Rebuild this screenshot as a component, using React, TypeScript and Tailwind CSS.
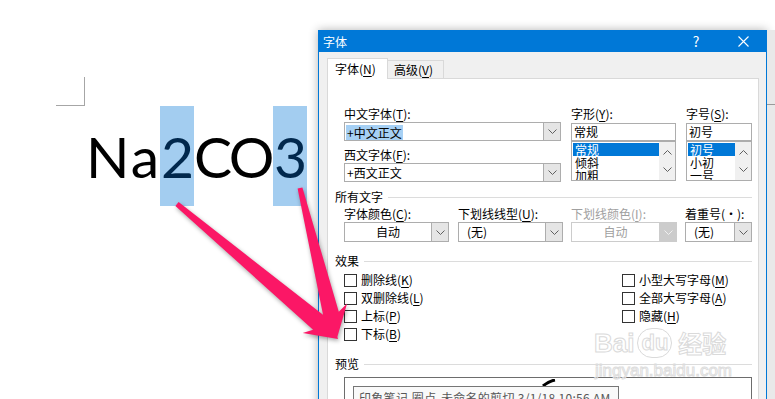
import React from "react";

const ui = "font-['Noto_Sans_CJK_SC',sans-serif]";

const Chevron = ({ up, color = "#606060" }: { up?: boolean; color?: string }) => (
  <svg width="9" height="5" viewBox="0 0 9 5">
    <path d={up ? "M0.5 4.5 L4.5 0.5 L8.5 4.5" : "M0.5 0.5 L4.5 4.5 L8.5 0.5"} stroke={color} fill="none" />
  </svg>
);

const Key = ({ k }: { k: string }) => <span className="underline underline-offset-2">{k}</span>;

const Label = ({ text, k, gray }: { text: string; k: string; gray?: boolean }) => (
  <div className={`h-[16px] leading-[16px] whitespace-nowrap ${gray ? "text-[#a0a0a0]" : "text-black"}`}>
    {text}(<Key k={k} />):
  </div>
);

const Dropdown = ({ text, w, center, disabled }: { text: string; w: string; center?: boolean; disabled?: boolean }) => (
  <div className={`flex h-[20px] border bg-white ${w} ${disabled ? "border-[#cccccc]" : "border-[#adadad]"}`}>
    <div className={`flex-1 leading-[18px] ${center ? "text-center" : "pl-[8px]"} ${disabled ? "text-[#a0a0a0]" : "text-black"}`}>{text}</div>
    <div className={`w-[17px] flex items-center justify-center border-l ${disabled ? "bg-[#cccccc] border-[#cccccc]" : "bg-[#e5e5e5] border-[#adadad]"}`}>
      <Chevron color={disabled ? "#f0f0f0" : "#606060"} />
    </div>
  </div>
);

const ListBox = ({ items, w }: { items: string[]; w: string }) => (
  <div className={`flex h-[40px] border border-[#adadad] bg-white ${w}`}>
    <div className="flex-1 pl-px pt-px overflow-hidden">
      {items.map((it, i) => (
        <div key={it} className={`h-[13px] leading-[13px] pl-[2px] ${i === 0 ? "bg-[#0078d7] text-white" : "text-black"}`}>
          {it}
        </div>
      ))}
    </div>
    <div className="w-[16px] bg-[#f0f0f0] flex flex-col items-center justify-between py-[8px]">
      <Chevron up />
      <Chevron />
    </div>
  </div>
);

const Check = ({ text, k }: { text: string; k: string }) => (
  <div className="flex items-center h-[18px]">
    <div className="w-[13px] h-[13px] border border-[#333333] bg-white" />
    <div className="ml-[4px] leading-[16px] whitespace-nowrap">
      {text}(<Key k={k} />)
    </div>
  </div>
);

const Section = ({ title }: { title: string }) => (
  <div className="flex items-center h-[16px]">
    <div className="leading-[16px] whitespace-nowrap">{title}</div>
    <div className="h-px bg-[#dcdcdc] flex-1 ml-[5px]" />
  </div>
);

function arrow(sx: number, sy: number, tx: number, ty: number, w0: number, w1: number, head: number, half: number, barb: number) {
  const L = Math.hypot(tx - sx, ty - sy);
  const ux = (tx - sx) / L, uy = (ty - sy) / L;
  const nx = -uy, ny = ux;
  const bx = tx - ux * head, by = ty - uy * head;
  const wx = tx - ux * (head + barb), wy = ty - uy * (head + barb);
  const p = [
    [sx + nx * w0, sy + ny * w0],
    [bx + nx * w1, by + ny * w1],
    [wx + nx * half, wy + ny * half],
    [tx, ty],
    [wx - nx * half, wy - ny * half],
    [bx - nx * w1, by - ny * w1],
    [sx - nx * w0, sy - ny * w0],
  ];
  return p.map((q) => `${q[0].toFixed(1)},${q[1].toFixed(1)}`).join(" ");
}

export default function App() {
  return (
    <div className={`relative w-[775px] h-[399px] overflow-hidden bg-white flex ${ui} text-[12px]`}>
      {/* document page */}
      <div className="w-[318px] shrink-0 pl-[56px] pt-[77px]">
        <div className="w-[29px] h-[29px] border-r border-b border-[#a6a6a6]" />
        <div className="ml-[29px] flex font-['Lato',sans-serif] text-[57px] leading-[100px] text-black whitespace-nowrap">
          <span className="w-[75px] pl-[1px] tracking-[2px]">Na</span>
          <span className="w-[34px] pl-[1px] bg-[#a3cdf0] text-[#01284d]">2</span>
          <span className="w-[79px] tracking-[-2.5px]">CO</span>
          <span className="w-[34px] pl-[1px] bg-[#a3cdf0] text-[#01284d]">3</span>
        </div>
      </div>

      {/* dialog */}
      <div className="mt-[30px] w-[449px] h-[380px] shrink-0 border border-[#0078d7] bg-[#f0f0f0] shadow-[0_0_9px_rgba(0,0,0,0.3)] flex flex-col">
        <div className="h-[25px] bg-[#0078d7] flex items-center text-white">
          <div className="pl-[4px] flex-1">字体</div>
          <div className="w-[20px] text-[14px] text-center">?</div>
          <div className="w-[46px] flex justify-center ml-[14px]">
            <svg width="11" height="11" viewBox="0 0 11 11">
              <path d="M0.5 0.5 L10.5 10.5 M10.5 0.5 L0.5 10.5" stroke="white" strokeWidth="1.1" />
            </svg>
          </div>
        </div>
        <div className="flex-1 flex flex-col pl-[8px] pr-[7px] pt-[6px]">
          <div className="flex items-end h-[20px]">
            <div className="relative z-10 -mb-px h-[21px] w-[61px] bg-white border-t border-l border-r border-[#d9d9d9] leading-[20px] pl-[7px]">
              字体(<Key k="N" />)
            </div>
            <div className="h-[18px] w-[56px] border-t border-r border-[#d9d9d9] leading-[17px] pl-[6px]">
              高级(<Key k="V" />)
            </div>
          </div>
          <div className="flex-1 border border-[#d9d9d9] bg-white pl-[7px] pr-[6px] pt-[27px] text-black">
            {/* font pickers */}
            <div className="flex pl-[9px]">
              <div className="w-[217px]">
                <Label text="中文字体" k="T" />
                <div className="flex h-[19px] border border-[#adadad] bg-white">
                  <div className="flex-1 pl-px pt-px">
                    <span className="bg-[#a6d0f4] leading-[15px] inline-block px-px">+中文正文</span>
                  </div>
                  <div className="w-[17px] flex items-center justify-center border-l border-[#adadad] bg-[#e5e5e5]">
                    <Chevron />
                  </div>
                </div>
                <div className="mt-[6px]">
                  <Label text="西文字体" k="F" />
                </div>
                <div className="flex h-[19px] border border-[#adadad] bg-white">
                  <div className="flex-1 pl-[2px] leading-[17px]">+西文正文</div>
                  <div className="w-[17px] flex items-center justify-center border-l border-[#adadad] bg-[#e5e5e5]">
                    <Chevron />
                  </div>
                </div>
              </div>
              <div className="w-[105px] ml-[10px]">
                <Label text="字形" k="Y" />
                <div className="mt-px h-[18px] border border-[#adadad] leading-[16px] pl-[2px]">常规</div>
                <ListBox items={["常规", "倾斜", "加粗"]} w="w-[105px]" />
              </div>
              <div className="w-[66px] ml-[10px]">
                <Label text="字号" k="S" />
                <div className="mt-px h-[18px] border border-[#adadad] leading-[16px] pl-[2px]">初号</div>
                <ListBox items={["初号", "小初", "一号"]} w="w-[66px]" />
              </div>
            </div>

            {/* all text */}
            <div className="mt-[7px]">
              <Section title="所有文字" />
            </div>
            <div className="flex pl-[9px] mt-px">
              <div className="w-[105px]">
                <Label text="字体颜色" k="C" />
                <Dropdown text="自动" w="w-[105px]" center />
              </div>
              <div className="w-[105px] ml-[9px]">
                <Label text="下划线线型" k="U" />
                <Dropdown text="(无)" w="w-[105px]" />
              </div>
              <div className="w-[106px] ml-[8px]">
                <Label text="下划线颜色" k="I" gray />
                <Dropdown text="自动" w="w-[106px]" center disabled />
              </div>
              <div className="w-[67px] ml-[8px]">
                <div className="h-[16px] leading-[16px] whitespace-nowrap">着重号(·):</div>
                <Dropdown text="(无)" w="w-[67px]" />
              </div>
            </div>

            {/* effects */}
            <div className="mt-[11px]">
              <Section title="效果" />
            </div>
            <div className="flex pl-[9px] mt-[2px]">
              <div className="w-[278px]">
                <Check text="删除线" k="K" />
                <Check text="双删除线" k="L" />
                <Check text="上标" k="P" />
                <Check text="下标" k="B" />
              </div>
              <div>
                <Check text="小型大写字母" k="M" />
                <Check text="全部大写字母" k="A" />
                <Check text="隐藏" k="H" />
              </div>
            </div>

            {/* preview */}
            <div className="mt-[13px]">
              <Section title="预览" />
            </div>
            <div className="relative ml-[9px] mt-[5px] h-[40px] border border-[#6d6d6d] bg-white">
              <svg className="absolute left-[196px] top-[1px]" width="16" height="14" viewBox="0 0 16 14">
                <path d="M2 7 Q8 2 14 1" stroke="black" strokeWidth="3" fill="none" />
                <path d="M10 8 Q14 10 12 14" stroke="#a0a0a0" strokeWidth="3" fill="none" />
              </svg>
              <div className="absolute left-[8px] top-[8px] h-[30px] w-[266px] border border-[#767676] bg-[#f9f9f9] pl-[5px] pt-[2px] text-[#575757] whitespace-nowrap tracking-[0.3px]">
                印象笔记.圈点-未命名的剪切 3/1/18 10:56 AM
              </div>
            </div>
          </div>
        </div>
      </div>

      {/* word background strip */}
      <div className="flex-1 mt-[30px] bg-[#e9e9e9] pt-[74px]">
        <div className="h-px bg-[#9a9a9a]" />
      </div>

      {/* watermark */}
      <div className="absolute left-[594px] top-[328px] flex items-end text-transparent [-webkit-text-stroke:1px_#dadada] font-['Liberation_Sans',sans-serif] font-bold">
        <span className="text-[26px] leading-[30px]">Bai</span>
        <span className="text-[22px] leading-[28px] ml-[3px] rounded-full border border-[#dadada] px-[3px]">du</span>
        <span className={`text-[24px] leading-[30px] ml-[6px] ${ui}`}>经验</span>
      </div>
      <div className="absolute left-[595px] top-[362px] text-[17px] leading-[18px] text-transparent [-webkit-text-stroke:1px_#dddddd] font-['Liberation_Sans',sans-serif]">
        jingyan.baidu.com
      </div>

      {/* annotation arrows */}
      <svg className="absolute left-0 top-0 drop-shadow-[1px_2px_2px_rgba(0,0,0,0.35)]" width="775" height="399">
        <polygon points={arrow(177, 204, 338, 339, 2.5, 9, 25, 18, 6)} fill="#fb1766" />
        <polygon points={arrow(300, 188, 337, 338, 2.5, 8, 25, 18, 6)} fill="#fb1766" />
      </svg>
    </div>
  );
}
